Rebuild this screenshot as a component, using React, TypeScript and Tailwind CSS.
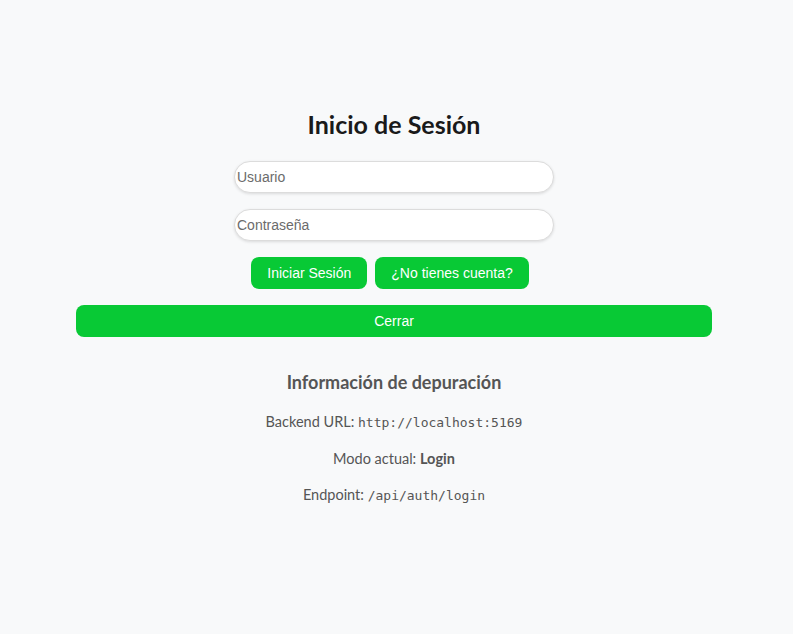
import React, { useState } from "react";

export default function App() {
  const [user, setUser] = useState("");
  const [pass, setPass] = useState("");

  return (
    <div className="min-h-[634px] bg-[#f8f9fa] pl-[76px] pr-[81px] pt-[108px] font-['Segoe_UI','Lato','Noto_Sans',sans-serif]">
      <div className="flex flex-col items-center">
        <h1 className="text-[25px] leading-[32px] font-bold text-[#1a1a1a]">Inicio de Sesión</h1>

        {/* Form */}
        <div className="mt-[21px] flex flex-col gap-4 w-[320px] font-['Liberation_Sans',Arial,sans-serif]">
          <input
            value={user}
            onChange={(e) => setUser(e.target.value)}
            placeholder="Usuario"
            className="h-[32px] w-full rounded-[16px] border border-[#dcdcdc] bg-white px-[2px] text-[14px] text-[#333] placeholder:text-[#6b6b6b] shadow-[0_1px_3px_rgba(0,0,0,0.12)] outline-none"
          />
          <input
            type="password"
            value={pass}
            onChange={(e) => setPass(e.target.value)}
            placeholder="Contraseña"
            className="h-[32px] w-full rounded-[16px] border border-[#dcdcdc] bg-white px-[2px] text-[14px] text-[#333] placeholder:text-[#6b6b6b] shadow-[0_1px_3px_rgba(0,0,0,0.12)] outline-none"
          />
        </div>

        <div className="mt-4 flex font-['Liberation_Sans',Arial,sans-serif]">
          <button className="mr-2 h-[32px] px-4 rounded-[8px] bg-[#08c935] text-white text-[14px]">Iniciar Sesión</button>
          <button className="mr-2 h-[32px] px-4 rounded-[8px] bg-[#08c935] text-white text-[14px]">¿No tienes cuenta?</button>
        </div>

        <button className="mt-4 h-[32px] w-full rounded-[8px] bg-[#08c935] text-white text-[14px] font-['Liberation_Sans',Arial,sans-serif]">
          Cerrar
        </button>

        {/* Debug info */}
        <div className="mt-[32px] flex flex-col items-center text-[#555]">
          <h3 className="text-[18px] leading-[26px] font-bold">Información de depuración</h3>
          <p className="mt-[17px] text-[14.5px] leading-[20px]">
            Backend URL: <code className="font-['DejaVu_Sans_Mono',monospace] text-[13px]">http://localhost:5169</code>
          </p>
          <p className="mt-[16px] text-[14.5px] leading-[20px]">
            Modo actual: <strong>Login</strong>
          </p>
          <p className="mt-[16px] text-[14.5px] leading-[20px]">
            Endpoint: <code className="font-['DejaVu_Sans_Mono',monospace] text-[13px]">/api/auth/login</code>
          </p>
        </div>
      </div>
    </div>
  );
}
